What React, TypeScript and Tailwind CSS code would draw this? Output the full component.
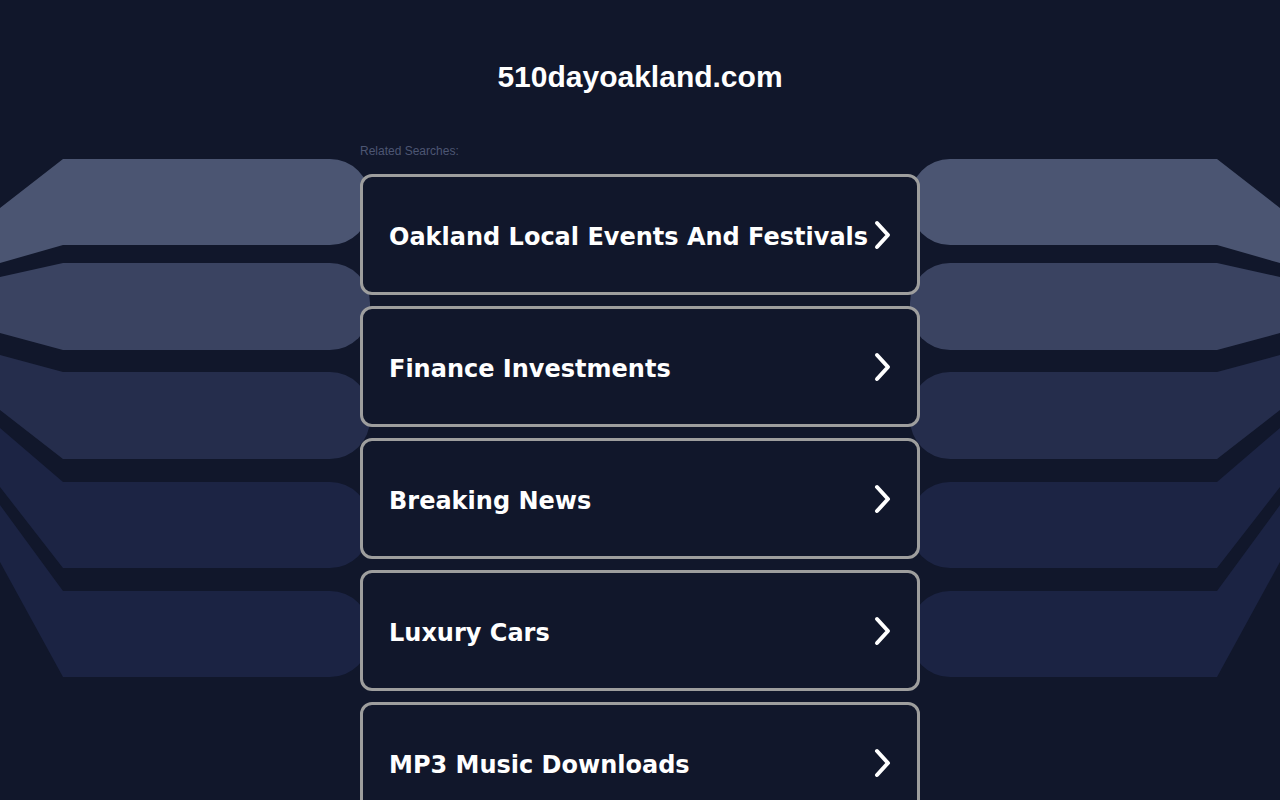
import React from "react";

const items = [
  "Oakland Local Events And Festivals",
  "Finance Investments",
  "Breaking News",
  "Luxury Cars",
  "MP3 Music Downloads",
];

type Band = { T: number; B: number; tL: number; bL: number; color: string };
const bands: Band[] = [
  { T: 159, B: 245, tL: 208, bL: 263, color: "#4b5572" },
  { T: 263, B: 350, tL: 277, bL: 333, color: "#3a4361" },
  { T: 372, B: 459, tL: 355, bL: 410, color: "#252d4c" },
  { T: 482, B: 568, tL: 428, bL: 487, color: "#1c2444" },
  { T: 591, B: 677, tL: 505, bL: 562, color: "#1b2343" },
];

function bandPath(b: Band) {
  const r = 40;
  const R = 370;
  return `M0,${b.tL} L63,${b.T} L${R - r},${b.T} A${r},${r} 0 0 1 ${R},${b.T + r} L${R},${b.B - r} A${r},${r} 0 0 1 ${R - r},${b.B} L63,${b.B} L0,${b.bL} Z`;
}

function Chevron() {
  return (
    <svg width="20" height="30" viewBox="0 0 20 30" className="shrink-0">
      <polyline
        points="4,3 15,15 4,27"
        fill="none"
        stroke="#ffffff"
        strokeWidth="4"
        strokeLinecap="round"
        strokeLinejoin="round"
      />
    </svg>
  );
}

export default function App() {
  return (
    <div className="relative min-h-[800px] w-full overflow-hidden bg-[#11172b]">
      <svg
        className="absolute inset-0 pointer-events-none"
        width="1280"
        height="800"
        viewBox="0 0 1280 800"
      >
        <g>
          {bands.map((b, i) => (
            <path key={i} d={bandPath(b)} fill={b.color} />
          ))}
        </g>
        <g transform="translate(1280,0) scale(-1,1)">
          {bands.map((b, i) => (
            <path key={i} d={bandPath(b)} fill={b.color} />
          ))}
        </g>
      </svg>
      <div className="relative flex flex-col items-center">
        <h1
          className="pt-[59px] text-[30px] leading-[36px] font-bold text-white"
          style={{ fontFamily: '"Liberation Sans", Arial, sans-serif' }}
        >
          510dayoakland.com
        </h1>
        <div className="w-[560px] pt-[49px]">
          <div
            className="text-[12px] leading-[14px] text-[#4d5673] mb-[16px]"
            style={{ fontFamily: '"Liberation Sans", Arial, sans-serif' }}
          >
            Related Searches:
          </div>
          <div className="flex flex-col gap-[11px]">
            {items.map((t) => (
              <div
                key={t}
                className="h-[121px] rounded-[12px] border-[3px] border-[#9e9e9e] bg-[#11172b] flex items-center justify-between pl-[26px] pr-[24px]"
              >
                <span
                  className="pt-[4px] text-[24px] font-bold text-white"
                  style={{ fontFamily: '"DejaVu Sans", Verdana, sans-serif' }}
                >
                  {t}
                </span>
                <Chevron />
              </div>
            ))}
          </div>
        </div>
      </div>
    </div>
  );
}
